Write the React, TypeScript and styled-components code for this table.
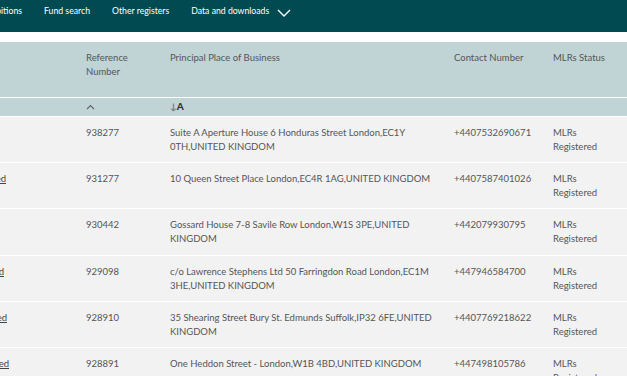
import styled, { createGlobalStyle } from "styled-components";

const GlobalStyle = createGlobalStyle`
  html, body {
    margin: 0;
    padding: 0;
    background: #ffffff;
    overflow: hidden;
  }
  body {
    font-family: "Lato", "Liberation Sans", sans-serif;
    color: #555555;
  }
`;

type Firm = {
  name: string;
  nameEnd: number;
  ref: string;
  address: string;
  phone: string;
  status: string;
};

const firms: Firm[] = [
  { name: "", nameEnd: 0, ref: "938277", address: "Suite A Aperture House 6 Honduras Street London,EC1Y 0TH,UNITED KINGDOM", phone: "+4407532690671", status: "MLRs Registered" },
  { name: "Capital Partners Limited", nameEnd: 6, ref: "931277", address: "10 Queen Street Place London,EC4R 1AG,UNITED KINGDOM", phone: "+4407587401026", status: "MLRs Registered" },
  { name: "", nameEnd: 0, ref: "930442", address: "Gossard House 7-8 Savile Row London,W1S 3PE,UNITED KINGDOM", phone: "+442079930795", status: "MLRs Registered" },
  { name: "Lawrence Holdings Ltd", nameEnd: 4, ref: "929098", address: "c/o Lawrence Stephens Ltd 50 Farringdon Road London,EC1M 3HE,UNITED KINGDOM", phone: "+447946584700", status: "MLRs Registered" },
  { name: "Suffolk Crypto Limited", nameEnd: 7, ref: "928910", address: "35 Shearing Street Bury St. Edmunds Suffolk,IP32 6FE,UNITED KINGDOM", phone: "+4407769218622", status: "MLRs Registered" },
  { name: "Heddon Assets Limited", nameEnd: 9, ref: "928891", address: "One Heddon Street - London,W1B 4BD,UNITED KINGDOM", phone: "+447498105786", status: "MLRs Registered" },
];

const navItems = ["Fund search", "Other registers", "Data and downloads"];

const NavBar = styled.nav`
  height: 32px;
  background: #024a52;
  display: flex;
  align-items: flex-start;
  gap: 22px;
  padding-top: 4px;
  box-sizing: border-box;
`;

const NavItem = styled.a<{ $clipEnd?: number }>`
  color: #ffffff;
  font-size: 8.7px;
  line-height: 14px;
  white-space: nowrap;
  display: flex;
  align-items: center;
  gap: 8px;
  ${(p) =>
    p.$clipEnd !== undefined &&
    `width: ${p.$clipEnd}px; justify-content: flex-end;`}
`;

const Chevron = () => (
  <svg width="14" height="8" viewBox="0 0 14 8" fill="none" style={{ marginTop: 3 }}>
    <path d="M1 1l6 6 6-6" stroke="#ffffff" strokeWidth="1.4" />
  </svg>
);

const Table = styled.table`
  margin-top: 10px;
  border-collapse: collapse;
  table-layout: fixed;
  width: 660px;
  font-size: 9.5px;
  line-height: 14px;
`;

const HeadCell = styled.th<{ $w: number }>`
  width: ${(p) => p.$w}px;
  background: #c0d3d5;
  color: #555555;
  font-weight: 400;
  text-align: left;
  vertical-align: top;
  padding: 9px 10px 0 8px;
  height: 55px;
  box-sizing: border-box;
`;

const SortCell = styled.td`
  background: #c0d3d5;
  border-top: 1px solid #ffffff;
  height: 19px;
  padding: 0 8px;
  box-sizing: border-box;
  vertical-align: middle;
`;

const SortAlpha = styled.span`
  font-size: 10px;
  font-weight: 900;
  color: #333333;
  .arrow {
    color: #777777;
    font-weight: 700;
    font-size: 9px;
  }
`;

const Row = styled.tr`
  background: #f2f2f2;
  border-top: 1px solid #ffffff;
`;

const Cell = styled.td`
  padding: 9px 10px 8.4px 8px;
  vertical-align: top;
  color: #555555;
`;

const NameWrap = styled.div<{ $end: number }>`
  width: ${(p) => p.$end}px;
  display: flex;
  justify-content: flex-end;
  white-space: nowrap;
  margin-left: -8px;
`;

const NameLink = styled.a`
  color: #444444;
  text-decoration: underline;
`;

const StatusText = styled.span`
  display: inline-block;
  width: 52px;
`;

export default function App() {
  return (
    <>
      <GlobalStyle />
      <NavBar>
        <NavItem $clipEnd={22}>Prohibitions</NavItem>
        {navItems.map((item, i) => (
          <NavItem key={item}>
            {item}
            {i === navItems.length - 1 && <Chevron />}
          </NavItem>
        ))}
      </NavBar>
      <Table>
        <thead>
          <tr>
            <HeadCell $w={78}></HeadCell>
            <HeadCell $w={84}>Reference Number</HeadCell>
            <HeadCell $w={284}>Principal Place of Business</HeadCell>
            <HeadCell $w={99}>Contact Number</HeadCell>
            <HeadCell $w={115}>MLRs Status</HeadCell>
          </tr>
        </thead>
        <tbody>
          <tr>
            <SortCell />
            <SortCell>
              <svg width="9" height="6" viewBox="0 0 9 6" fill="none">
                <path d="M1 5l3.5-3.5L8 5" stroke="#666666" strokeWidth="1.2" />
              </svg>
            </SortCell>
            <SortCell>
              <SortAlpha>
                <span className="arrow">↓</span>A
              </SortAlpha>
            </SortCell>
            <SortCell />
            <SortCell />
          </tr>
          {firms.map((f) => (
            <Row key={f.ref}>
              <Cell>
                {f.name && (
                  <NameWrap $end={f.nameEnd}>
                    <NameLink>{f.name}</NameLink>
                  </NameWrap>
                )}
              </Cell>
              <Cell>{f.ref}</Cell>
              <Cell>{f.address}</Cell>
              <Cell>{f.phone}</Cell>
              <Cell>
                <StatusText>{f.status}</StatusText>
              </Cell>
            </Row>
          ))}
        </tbody>
      </Table>
    </>
  );
}
